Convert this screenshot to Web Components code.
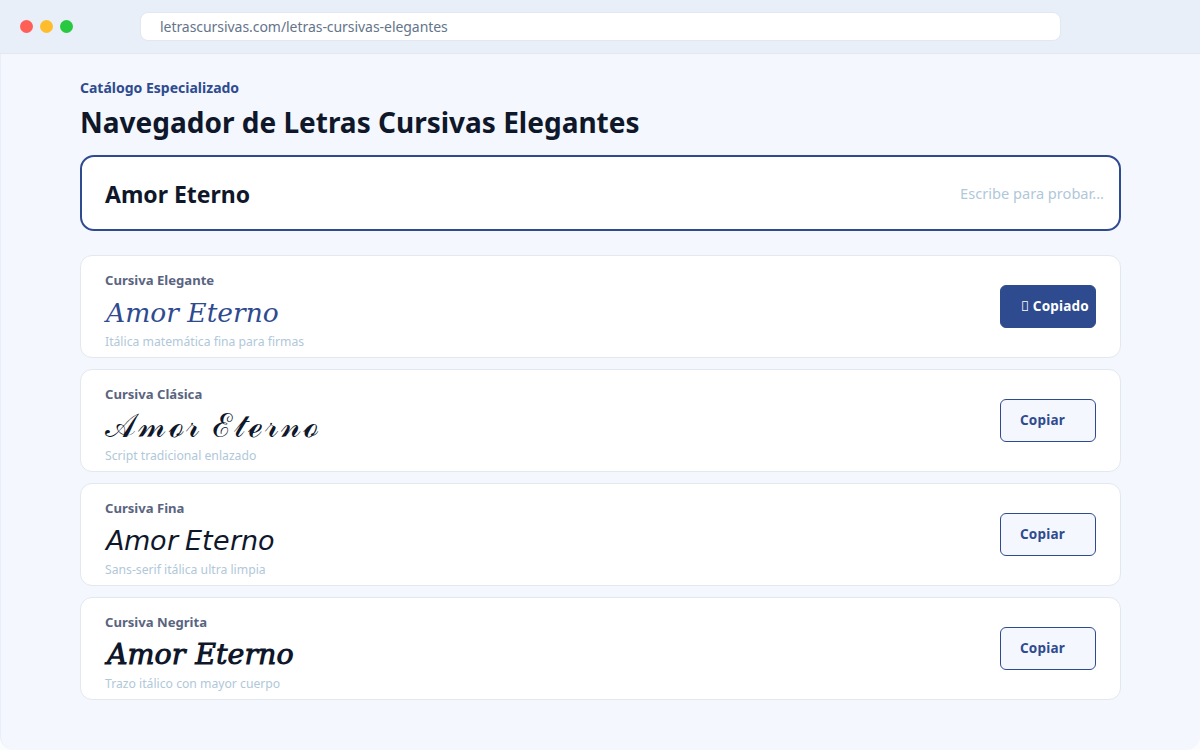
<!DOCTYPE html>
<html lang="es"><head><meta charset="utf-8"><title>Letras</title>
<style>
html,body{margin:0;padding:0;height:100%}
html{background:#fbfcfe}
body{font-family:"Noto Sans",sans-serif;background:transparent;width:1200px;height:750px;overflow:hidden}
</style></head><body>
<browser-bar url="letrascursivas.com/letras-cursivas-elegantes"></browser-bar>
<main-page>
  <page-head eyebrow="Catálogo Especializado" title="Navegador de Letras Cursivas Elegantes"></page-head>
  <sample-input value="Amor Eterno" hint="Escribe para probar..."></sample-input>
  <font-list>
    <font-card label="Cursiva Elegante" note="Itálica matemática fina para firmas" sample="𝐴𝑚𝑜𝑟 𝐸𝑡𝑒𝑟𝑛𝑜" color="#2f4b8f" fstyle="font-family:'DejaVu Serif',serif;font-size:26.5px;padding-left:1px;line-height:40px" copied></font-card>
    <font-card label="Cursiva Clásica" note="Script tradicional enlazado" sample="𝒜𝓂ℴ𝓇 ℰ𝓉ℯ𝓇𝓃ℴ" color="#0f172a" fstyle="font-family:'Noto Sans',serif;font-size:33px;letter-spacing:2px;line-height:36px"></font-card>
    <font-card label="Cursiva Fina" note="Sans-serif itálica ultra limpia" sample="𝘈𝘮𝘰𝘳 𝘌𝘵𝘦𝘳𝘯𝘰" color="#0f172a" fstyle="font-family:'Noto Sans',sans-serif;font-size:27px;padding-left:1px"></font-card>
    <font-card label="Cursiva Negrita" note="Trazo itálico con mayor cuerpo" sample="𝐴𝑚𝑜𝑟 𝐸𝑡𝑒𝑟𝑛𝑜" color="#0f172a" fstyle="font-family:'DejaVu Serif',serif;font-size:28.5px;font-weight:700;padding-left:2px;line-height:38px"></font-card>
  </font-list>
</main-page>
<script>
function def(name, css, html){
  customElements.define(name, class extends HTMLElement{
    connectedCallback(){
      if(this.shadowRoot) return;
      const s=this.attachShadow({mode:'open'});
      s.innerHTML='<style>'+css+'</style>'+html(this);
    }
  });
}
def('browser-bar',`
:host{display:flex;box-sizing:border-box;height:54px;background:#e9eff8;border-bottom:1px solid #e2e8f0;padding:0 20px;align-items:center}
.d{width:13px;height:13px;border-radius:50%;flex:none}
.d+.d{margin-left:7px}
.dots{display:flex;width:53px;margin-right:67px}
.u{width:921px;height:29px;box-sizing:border-box;background:#fff;border:1px solid #e2e8f0;border-radius:8px;padding-left:19px;font-size:14px;line-height:28px;color:#64748b;letter-spacing:-.05px}
`,e=>`<div class="dots"><i class="d" style="background:#ff5f57"></i><i class="d" style="background:#ffbd2e"></i><i class="d" style="background:#28c840"></i></div><div class="u">${e.getAttribute('url')}</div>`);
def('main-page',`:host{display:block;height:696px;box-sizing:border-box;background:#f4f7fd;border-left:1px solid #e9eff8;border-radius:0 0 14px 14px;padding:24px 79px 0 79px}`,()=>`<slot></slot>`);
def('page-head',`
:host{display:block;margin-bottom:14px}
.e{font-size:14px;font-weight:700;color:#2f4b8f;line-height:20px}
h1{margin:5px 0 0;font-size:28px;font-weight:700;color:#0f172a;line-height:38px}
`,e=>`<div class="e">${e.getAttribute('eyebrow')}</div><h1>${e.getAttribute('title')}</h1>`);
def('sample-input',`
:host{display:flex;box-sizing:border-box;height:76px;background:#fff;border:2px solid #2f4b8f;border-radius:14px;padding:0 15px 0 23px;align-items:center;justify-content:space-between;margin-bottom:24px}
.v{font-size:23px;font-weight:700;color:#0f172a;padding-top:1px}
.h{font-size:14.6px;color:#b0c8d9;padding-bottom:1px}
`,e=>`<span class="v">${e.getAttribute('value')}</span><span class="h">${e.getAttribute('hint')}</span>`);
def('font-list',`:host{display:flex;flex-direction:column;gap:11px}`,()=>`<slot></slot>`);
def('font-card',`
:host{display:flex;box-sizing:border-box;height:103px;background:#fff;border:1px solid #e2e8f0;border-radius:12px;padding:0 24px;align-items:center;justify-content:space-between}
.t{display:flex;flex-direction:column;padding-top:7px}
.l{font-size:13.1px;font-weight:700;color:#5a6480;line-height:18px}
.sw{height:38px;margin-top:4px;display:flex;align-items:center;overflow:visible}
.s{white-space:nowrap;height:38px}
.n{font-size:12.2px;color:#b0c8d9;line-height:16px;margin-top:3px}
button{all:unset;box-sizing:border-box;width:96px;height:43px;border-radius:6px;border:1px solid #2f4b8f;background:#f4f7fd;color:#2f4b8f;font:700 13.5px "Noto Sans",sans-serif;letter-spacing:.2px;padding:0 0 2px 19px;display:flex;align-items:center}
button.on{background:#2f4b8f;color:#fff;padding-left:20px}
`,e=>{const c=e.hasAttribute('copied');return `<div class="t"><div class="l">${e.getAttribute('label')}</div><div class="sw"><div class="s" style="color:${e.getAttribute('color')};${e.getAttribute('fstyle')}">${e.getAttribute('sample')}</div></div><div class="n">${e.getAttribute('note')}</div></div><button class="${c?'on':''}">${c?'\uE000 Copiado':'Copiar'}</button>`});
</script>
</body></html>
